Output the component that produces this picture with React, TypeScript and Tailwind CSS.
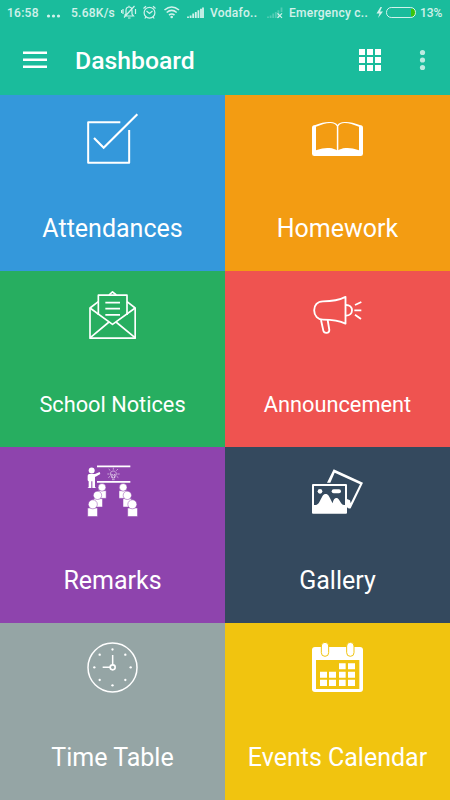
import type { ReactNode } from "react";
import clsx from "clsx";

interface Tile {
  label: string;
  color: string;
  icon: ReactNode;
  labelClass?: string;
}

interface TileIconProps {
  top?: number;
  children: ReactNode;
}

function TileIcon({ top = 0, children }: TileIconProps) {
  return (
    <svg
      className="h-[70px] w-[75px] shrink-0"
      viewBox={`0 ${top} 225 210`}
      fill="none"
      stroke="#fff"
      strokeWidth="6"
    >
      {children}
    </svg>
  );
}

function AttendanceIcon() {
  return (
    <TileIcon top={-3}>
      <path d="M136 51.500H39.500V173.500H162.500V75" strokeLinejoin="round" />
      <path d="M57 99 86 128 187 28" strokeWidth="6.500" />
    </TileIcon>
  );
}

function HomeworkIcon() {
  return (
    <TileIcon top={-3}>
      <path
        fill="#fff"
        stroke="none"
        fillRule="evenodd"
        d="M46 60C64 54 76 50 91 51 103 52 109 55 112.500 60 116 55 122 52 134 51 149 50 161 54 179 60Q189 61 189 68V146Q189 153 182 153H43Q36 153 36 146V68Q36 61 46 60ZM48 65V136C66 130 75 128 88 129 99 130 106 133 110.500 136V64C106 57 100 54 91 54 77 54 66 59 48 65ZM177 65C159 59 148 54 134 54 125 54 119 57 115 64V136C119 133 126 130 137 129 150 128 159 130 177 136Z"
      />
    </TileIcon>
  );
}

function NoticesIcon() {
  return (
    <TileIcon>
      <g strokeWidth="5" strokeLinejoin="round">
        <path d="M70 105V45.500H156V105" />
        <path d="M102 45 112.500 35.500 124 45" />
        <path d="M70 65 45 84V174.500H180.500V84L156 65" />
        <path d="M45 84 112.500 133 180.500 84M46 173 102 126M180 173 123 126" />
        <path d="M91 68H135M91 86H135M91 104.500H135" />
      </g>
    </TileIcon>
  );
}

function AnnouncementIcon() {
  return (
    <TileIcon>
      <g strokeWidth="5.500" strokeLinejoin="round">
        <path d="M136.500 50.500C118 60 98 64 69 64 52 64 42.500 76 42.500 91 42.500 108 54 119 69 119 100 119 118 122 136.500 131Z" />
        <path d="M138 75C149 75 156 82 156 91S149 107 138 107" />
        <path d="M63 120 70 152C72 161 88 161 88 150L83 120" />
        <path d="M165 75 184 66M163 91H184M165 104 183 117" />
      </g>
    </TileIcon>
  );
}

function RemarksIcon() {
  return (
    <TileIcon top={3}>
      <path d="M66 34H166M66 80.500H166" strokeWidth="5" />
      <g fill="#fff" stroke="none">
        <circle cx="50" cy="46.500" r="9" />
        <path d="M43 57H60L74 51 76 57 62 65H60V97Q63 98 63 99H52V79H49V99H38Q38 98 41 97V79Q38 78 38 75V62Q38 57 43 57Z" />
      </g>
      <path
        strokeWidth="2"
        opacity=".8"
        d="M111 69C111 63 106 62 106 57 106 45 124 45 124 57 124 62 119 63 119 69ZM111 74H119M112 69 110 57 115 61 120 57 118 69M115 44V38M106 47 101 42M124 47 129 42M103 57H97M127 57H134M105 64 100 68M125 64 130 68"
      />
      <g fill="#fff" stroke="#8e44ad" strokeWidth="1.500">
        <path d="M69 107H93.500V130H69Z" />
        <circle cx="81" cy="97" r="11.500" />
        <path d="M56 131H82.500V156H56Z" />
        <circle cx="67.500" cy="121" r="12.500" />
        <path d="M38 159H67.500V184.500H38Z" />
        <circle cx="53.500" cy="148" r="13.500" />
        <path d="M132 107H156.500V130H132Z" />
        <circle cx="144.500" cy="97" r="11.500" />
        <path d="M144 131H169.500V156H144Z" />
        <circle cx="157" cy="121" r="12.500" />
        <path d="M158 159H187.500V184.500H158Z" />
        <circle cx="172" cy="148" r="13.500" />
      </g>
    </TileIcon>
  );
}

function GalleryIcon() {
  return (
    <TileIcon top={3}>
      <path
        fill="#fff"
        stroke="none"
        d="M101 43 189 83 152 160Q146 162 141 157V132L150 136 152 145 180 88 104 53 91 83H81Z"
      />
      <path d="M39 90H138V173H39Z" strokeWidth="6" strokeLinejoin="round" />
      <g fill="#fff" stroke="none">
        <path d="M42 150H47C57 149 60 135 68 122 72 115 82 115 86 122 91 130 94 138 98 145 100 129 111 125 117 134 123 142 124 149 132 150H137V174H42Z" />
        <circle cx="60" cy="109" r="7" />
        <rect x="95" y="103" width="28" height="12" rx="6" />
      </g>
    </TileIcon>
  );
}

function ClockIcon() {
  return (
    <TileIcon>
      <circle cx="112.500" cy="106.500" r="73.500" strokeWidth="4.500" />
      <circle cx="113" cy="106" r="7.500" strokeWidth="5" />
      <path d="M113 99V69M105 106H83" strokeWidth="4.500" />
      <g fill="#fff" stroke="none">
        <circle cx="112.500" cy="52.500" r="3.500" />
        <circle cx="151" cy="68" r="3.500" />
        <circle cx="167" cy="106" r="3.500" />
        <circle cx="151" cy="144" r="3.500" />
        <circle cx="112.500" cy="160" r="3.500" />
        <circle cx="74" cy="144" r="3.500" />
        <circle cx="58" cy="106" r="3.500" />
        <circle cx="74" cy="68" r="3.500" />
      </g>
    </TileIcon>
  );
}

function CalendarIcon() {
  return (
    <TileIcon>
      <g fill="#fff" stroke="none">
        <rect x="36" y="45" width="153" height="135" rx="9" />
        <path fill="#f1c40f" d="M48 84H178V171H48Z" />
        <g stroke="#f1c40f" strokeWidth="3">
          <rect x="64" y="31" width="22" height="42" rx="11" />
          <rect x="140" y="31" width="22" height="42" rx="11" />
        </g>
        <path d="M117 94H137V112H117ZM144 94H165V112H144ZM60 119H81V137H60ZM87 119H108V137H87ZM117 119H137V137H117ZM144 119H165V137H144ZM60 143H81V162H60ZM87 143H108V162H87ZM117 143H137V162H117ZM144 143H165V162H144Z" />
      </g>
    </TileIcon>
  );
}

const tiles: Tile[] = [
  { label: "Attendances", color: "bg-[#3498db]", icon: <AttendanceIcon /> },
  { label: "Homework", color: "bg-[#f39c12]", icon: <HomeworkIcon /> },
  {
    label: "School Notices",
    color: "bg-[#27ae60]",
    icon: <NoticesIcon />,
    labelClass: "mt-10 text-[21.75px]",
  },
  {
    label: "Announcement",
    color: "bg-[#ef5350]",
    icon: <AnnouncementIcon />,
    labelClass: "mt-10 text-[21.75px]",
  },
  { label: "Remarks", color: "bg-[#8e44ad]", icon: <RemarksIcon /> },
  { label: "Gallery", color: "bg-[#34495e]", icon: <GalleryIcon /> },
  {
    label: "Time Table",
    color: "bg-[#95a5a5]",
    icon: <ClockIcon />,
    labelClass: "mt-[41px] text-[25px]",
  },
  {
    label: "Events Calendar",
    color: "bg-[#f1c40f]",
    icon: <CalendarIcon />,
    labelClass: "mt-[41px] text-[25px]",
  },
];

function StatusBar() {
  return (
    <div className="flex h-[26px] items-center pl-[7px] text-xs font-medium tracking-[0.25px] whitespace-nowrap text-white/80">
      <span className="w-[39px]">16:58</span>
      <svg className="h-[26px] w-[25px]" viewBox="0 0 25 26" fill="currentColor">
        <circle cx="2.500" cy="16" r="1.600" />
        <circle cx="7.500" cy="16" r="1.600" />
        <circle cx="12.500" cy="16" r="1.600" />
      </svg>
      <span className="w-[50px]">5.68K/s</span>
      {/* muted bell, alarm, wifi, signal */}
      <svg
        className="h-[26px] w-[89px]"
        viewBox="0 0 89 26"
        fill="none"
        stroke="currentColor"
        strokeWidth="1.200"
      >
        <path d="M3.500 15.500 5 14V10.500C5 8 6.500 7 8 7S11 8 11 10.500V14L12.500 16H3.500M7 18H9.500M8 7V5.700M13.500 6 3 17.500M2 9V14M14.500 9V14M.500 10V13" />
        <circle cx="28.500" cy="12.700" r="5.400" />
        <path d="M25.500 11 28.500 13.500 31.500 11M22.500 8.500 25 6.200M34.500 8.500 32 6.200M25 17 23.800 18.500M32 17 33.200 18.500" />
        <path
          strokeWidth="1.600"
          d="M43.500 10Q50.700 4 58 10M45.700 12.500Q50.700 8.300 55.700 12.500M48 15Q50.700 12.900 53.500 15"
        />
        <circle cx="50.700" cy="17" r="1.300" fill="currentColor" stroke="none" />
        <path
          strokeWidth="1.800"
          d="M67 18V16.500M69.600 18V15.500M72.200 18V13.500M74.800 18V12M77.400 18V10.300M80 18V8.700M82 18V7.500"
        />
      </svg>
      <span className="w-[56px]">Vodafo..</span>
      <svg
        className="h-[26px] w-[23px]"
        viewBox="0 0 23 26"
        fill="none"
        stroke="currentColor"
      >
        <path
          strokeWidth="1.800"
          opacity=".3"
          d="M2 18V16.500M4.600 18V15.500M7.200 18V13.500M9.800 18V12M12.400 18V10.300M15.500 12V7.500"
        />
        <path strokeWidth="1.200" d="M11.500 13.300 16 17.800M16 13.300 11.500 17.800" />
      </svg>
      <span className="w-[87px]">Emergency c..</span>
      {/* charging bolt and battery */}
      <svg className="h-[26px] w-[44px]" viewBox="0 0 44 26" fill="none">
        <path fill="currentColor" d="M4.500 7 .500 13.500H3.500L2 18 7 11.500H4L6 7Z" />
        <path
          fill="#39c40c"
          d="M35 8.800H36.500C38.500 8.800 39.500 10.500 39.500 12.700S38.500 16.600 36.500 16.600H35Z"
        />
        <rect
          x="10.500"
          y="7.500"
          width="29"
          height="10"
          rx="4.800"
          stroke="currentColor"
        />
      </svg>
      <span className="tracking-[-0.1px]">13%</span>
    </div>
  );
}

function AppBar() {
  return (
    <div className="flex h-[69px] items-center pl-[23px]">
      <svg className="h-6 w-6 shrink-0" viewBox="0 0 24 24" fill="#fff">
        <path d="M0 2.500H24V5H0ZM0 9.500H24V12H0ZM0 16.500H24V19H0Z" />
      </svg>
      <h1 className="ml-7 flex-1 text-[24.750px] leading-[30px] font-medium text-white">
        Dashboard
      </h1>
      <svg className="h-6 w-[22px] shrink-0" viewBox="0 0 22 24" fill="#fff">
        <path d="M0 0H6V6H0ZM8 0H14V6H8ZM16 0H22V6H16ZM0 8H6V14H0ZM8 8H14V14H8ZM16 8H22V14H16ZM0 16H6V22H0ZM8 16H14V22H8ZM16 16H22V22H16Z" />
      </svg>
      <svg
        className="mr-[24px] ml-[38px] h-6 w-[7px] shrink-0"
        viewBox="0 0 7 24"
        fill="#fff"
        opacity=".7"
      >
        <circle cx="3.500" cy="3.500" r="2.600" />
        <circle cx="3.500" cy="11" r="2.600" />
        <circle cx="3.500" cy="18.500" r="2.600" />
      </svg>
    </div>
  );
}

export default function App() {
  return (
    <div className="flex h-screen flex-col overflow-hidden bg-[#1abc9c] font-['Roboto',sans-serif]">
      <header className="h-[95px] shrink-0">
        <StatusBar />
        <AppBar />
      </header>
      <main className="grid flex-1 grid-cols-2 grid-rows-[176px_176px_176px_1fr]">
        {tiles.map((tile) => (
          <button
            key={tile.label}
            type="button"
            className={clsx(
              "flex flex-col items-center justify-start pt-[9px] text-white",
              tile.color
            )}
          >
            {tile.icon}
            <span
              className={clsx(
                "leading-[30px] whitespace-nowrap",
                tile.labelClass ?? "mt-10 text-[25px]"
              )}
            >
              {tile.label}
            </span>
          </button>
        ))}
      </main>
    </div>
  );
}
